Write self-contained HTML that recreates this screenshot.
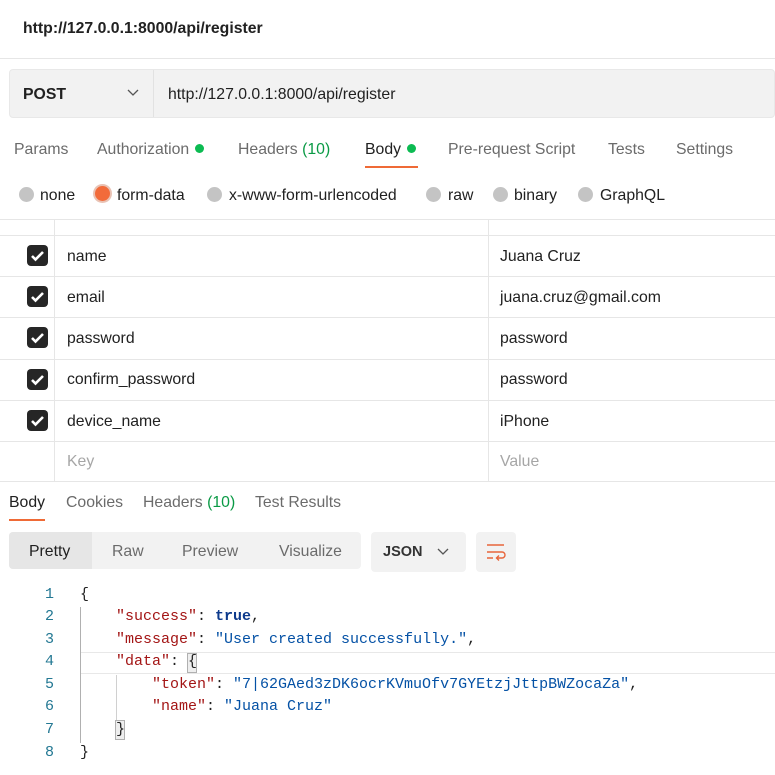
<!DOCTYPE html>
<html><head><meta charset="utf-8"><style>
*{margin:0;padding:0;box-sizing:border-box}
body{width:775px;height:775px;background:#fff;font-family:"Liberation Sans",sans-serif;font-size:15.8px;color:#212121;position:relative;overflow:hidden}
.a{position:absolute;white-space:nowrap}
.t{margin-top:1px}
.g{color:#6b6b6b}
.dot{display:inline-block;width:9px;height:9px;border-radius:50%;background:#0cbb52;margin-left:6px;vertical-align:1px}
.rad{position:absolute;width:15px;height:15px;border-radius:50%;background:#c4c4c4}
.hl{position:absolute;left:0;right:0;height:1px;background:#e6e6e6}
.cb{position:absolute;left:27px;width:21px;height:21px;border-radius:4px;background:#262626}
.cb svg{position:absolute;left:3px;top:3px}
.code{font-family:"Liberation Mono",monospace;font-size:15px}
.ln{position:absolute;left:30px;width:24px;text-align:right;color:#237893;font-family:"Liberation Mono",monospace;font-size:15px}
.k{color:#a31515}.s{color:#0451a5}.b{color:#0d3a8c;font-weight:bold}
</style></head><body>
<div class="a t" style="left:23px;top:19px;font-weight:bold">http://127.0.0.1:8000/api/register</div>
<div class="hl" style="top:58px"></div>
<div class="a" style="left:9px;top:69px;width:766px;height:49px;background:#f2f2f2;border:1px solid #e8e8e8;border-radius:4px"></div>
<div class="a" style="left:153px;top:70px;width:1px;height:47px;background:#e2e2e2"></div>
<div class="a t" style="left:23px;top:85px;font-weight:bold">POST</div>
<svg class="a" style="left:127px;top:89px" width="12" height="8"><path d="M1 1l5 5 5-5" stroke="#555" fill="none" stroke-width="1.3"/></svg>
<div class="a t" style="left:168px;top:85px">http://127.0.0.1:8000/api/register</div>

<div class="a g t" style="left:14px;top:140px">Params</div>
<div class="a g t" style="left:97px;top:140px">Authorization<span class="dot"></span></div>
<div class="a g t" style="left:238px;top:140px">Headers <span style="color:#0a9a45">(10)</span></div>
<div class="a t" style="left:365px;top:140px">Body<span class="dot"></span></div>
<div class="a" style="left:365px;top:166px;width:53px;height:2px;background:#ef6a36"></div>
<div class="a g t" style="left:448px;top:140px">Pre-request Script</div>
<div class="a g t" style="left:608px;top:140px">Tests</div>
<div class="a g t" style="left:676px;top:140px">Settings</div>

<div class="rad" style="left:19px;top:187px"></div><div class="a t" style="left:40px;top:186px">none</div>
<div class="rad" style="left:95px;top:186px;background:#f26b3a;box-shadow:0 0 0 2px #e9c2b4"></div><div class="a t" style="left:117px;top:186px">form-data</div>
<div class="rad" style="left:207px;top:187px"></div><div class="a t" style="left:229px;top:186px">x-www-form-urlencoded</div>
<div class="rad" style="left:426px;top:187px"></div><div class="a t" style="left:448px;top:186px">raw</div>
<div class="rad" style="left:493px;top:187px"></div><div class="a t" style="left:514px;top:186px">binary</div>
<div class="rad" style="left:578px;top:187px"></div><div class="a t" style="left:600px;top:186px">GraphQL</div>

<div class="hl" style="top:219px"></div>
<div class="hl" style="top:235px"></div>
<div class="hl" style="top:276px"></div>
<div class="hl" style="top:317px"></div>
<div class="hl" style="top:359px"></div>
<div class="hl" style="top:400px"></div>
<div class="hl" style="top:441px"></div>
<div class="hl" style="top:481px"></div>
<div class="a" style="left:54px;top:220px;width:1px;height:261px;background:#e6e6e6"></div>
<div class="a" style="left:488px;top:220px;width:1px;height:261px;background:#e6e6e6"></div>

<div class="cb" style="top:245px"><svg width="15" height="15"><path d="M2 8l3.5 3.5L13 4" stroke="#fff" stroke-width="2.6" fill="none"/></svg></div>
<div class="cb" style="top:286px"><svg width="15" height="15"><path d="M2 8l3.5 3.5L13 4" stroke="#fff" stroke-width="2.6" fill="none"/></svg></div>
<div class="cb" style="top:327px"><svg width="15" height="15"><path d="M2 8l3.5 3.5L13 4" stroke="#fff" stroke-width="2.6" fill="none"/></svg></div>
<div class="cb" style="top:369px"><svg width="15" height="15"><path d="M2 8l3.5 3.5L13 4" stroke="#fff" stroke-width="2.6" fill="none"/></svg></div>
<div class="cb" style="top:410px"><svg width="15" height="15"><path d="M2 8l3.5 3.5L13 4" stroke="#fff" stroke-width="2.6" fill="none"/></svg></div>

<div class="a t" style="left:67px;top:247px">name</div><div class="a t" style="left:500px;top:247px">Juana Cruz</div>
<div class="a t" style="left:67px;top:288px">email</div><div class="a t" style="left:500px;top:288px">juana.cruz@gmail.com</div>
<div class="a t" style="left:67px;top:329px">password</div><div class="a t" style="left:500px;top:329px">password</div>
<div class="a t" style="left:67px;top:370px">confirm_password</div><div class="a t" style="left:500px;top:370px">password</div>
<div class="a t" style="left:67px;top:412px">device_name</div><div class="a t" style="left:500px;top:412px">iPhone</div>
<div class="a t" style="left:67px;top:452px;color:#a6a6a6">Key</div><div class="a t" style="left:500px;top:452px;color:#a6a6a6">Value</div>

<div class="a t" style="left:9px;top:493px">Body</div>
<div class="a" style="left:9px;top:519px;width:36px;height:2px;background:#ef6a36"></div>
<div class="a g t" style="left:66px;top:493px">Cookies</div>
<div class="a g t" style="left:143px;top:493px">Headers <span style="color:#0a9a45">(10)</span></div>
<div class="a g t" style="left:255px;top:493px">Test Results</div>

<div class="a" style="left:9px;top:532px;width:352px;height:37px;background:#f2f2f2;border-radius:4px"></div>
<div class="a" style="left:9px;top:532px;width:83px;height:37px;background:#e6e6e6;border-radius:4px 0 0 4px"></div>
<div class="a t" style="left:29px;top:542px">Pretty</div>
<div class="a g t" style="left:112px;top:542px">Raw</div>
<div class="a g t" style="left:182px;top:542px">Preview</div>
<div class="a g t" style="left:279px;top:542px">Visualize</div>
<div class="a" style="left:371px;top:532px;width:95px;height:40px;background:#f2f2f2;border-radius:4px"></div>
<div class="a t" style="left:383px;top:543px;font-weight:bold;font-size:14.5px;color:#333">JSON</div>
<svg class="a" style="left:437px;top:548px" width="12" height="8"><path d="M1 1l5 5 5-5" stroke="#555" fill="none" stroke-width="1.3"/></svg>
<div class="a" style="left:476px;top:532px;width:40px;height:40px;background:#f2f2f2;border-radius:4px"></div>
<svg class="a" style="left:486px;top:543px" width="20" height="18"><path d="M1 2h17M1 9h15a3 3 0 0 1 0 6h-5M1 15h6M13 12.5l-2.5 2.5 2.5 2.5" stroke="#e8643a" fill="none" stroke-width="1.4"/></svg>

<div class="a" style="left:80px;top:652px;right:0;height:22px;border-top:1px solid #e8e8e8;border-bottom:1px solid #e8e8e8"></div>
<div class="a" style="left:80px;top:607px;width:1px;height:136px;background:#b0b0b0"></div>
<div class="a" style="left:116px;top:675px;width:1px;height:45px;background:#d0d0d0"></div>
<div class="a" style="left:187px;top:653px;width:10px;height:20px;border:1px solid #b0b0b0;background:#eee"></div>
<div class="a" style="left:115px;top:720px;width:10px;height:20px;border:1px solid #b0b0b0;background:#eee"></div>

<div class="ln" style="top:586px">1</div>
<div class="ln" style="top:608px">2</div>
<div class="ln" style="top:631px">3</div>
<div class="ln" style="top:653px">4</div>
<div class="ln" style="top:676px">5</div>
<div class="ln" style="top:698px">6</div>
<div class="ln" style="top:721px">7</div>
<div class="ln" style="top:744px">8</div>
<div class="a code" style="left:80px;top:586px">{</div>
<div class="a code" style="left:116px;top:608px"><span class="k">"success"</span>: <span class="b">true</span>,</div>
<div class="a code" style="left:116px;top:631px"><span class="k">"message"</span>: <span class="s">"User created successfully."</span>,</div>
<div class="a code" style="left:116px;top:653px"><span class="k">"data"</span>: {</div>
<div class="a code" style="left:152px;top:676px"><span class="k">"token"</span>: <span class="s">"7|62GAed3zDK6ocrKVmuOfv7GYEtzjJttpBWZocaZa"</span>,</div>
<div class="a code" style="left:152px;top:698px"><span class="k">"name"</span>: <span class="s">"Juana Cruz"</span></div>
<div class="a code" style="left:116px;top:721px">}</div>
<div class="a code" style="left:80px;top:744px">}</div>
</body></html>
